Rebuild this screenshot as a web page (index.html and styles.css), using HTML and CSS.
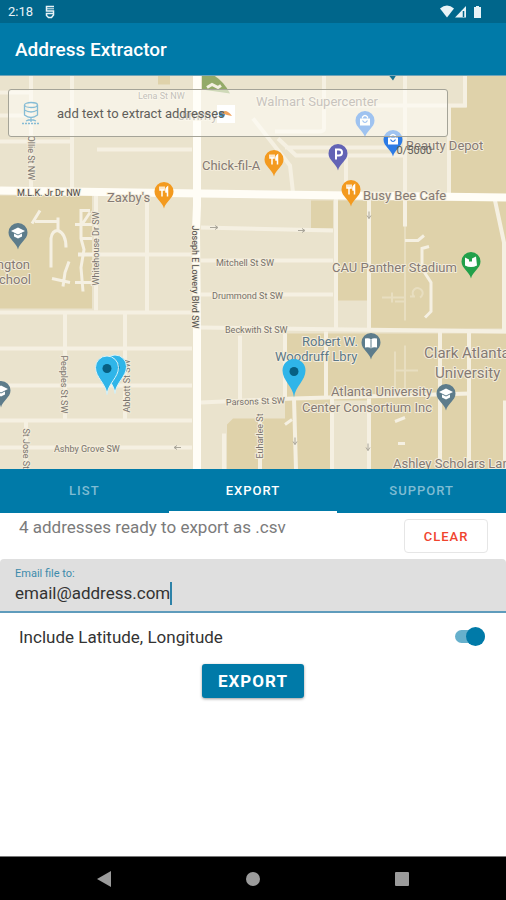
FILE: index.html
```html
<!DOCTYPE html>
<html lang="en">
<head>
	<meta charset="utf-8">
	<meta name="viewport" content="width=device-width, initial-scale=1.0">
	<title>Address Extractor</title>
	<link rel="stylesheet" href="styles.css">
</head>
<body>
	<!-- status bar -->
	<div class="status">
		<span class="time">2:18</span>
		<svg class="status-app" width="10" height="14" viewBox="0 0 10 14">
			<path d="M9 1.500H1.500V6H8.500V10L6.500 12.500H3.500L1.500 10.500V8.500H8" fill="none" stroke="currentColor" stroke-width="1.500"/>
			<path d="M2 3.800H9" fill="none" stroke="currentColor" stroke-width="1"/>
		</svg>
		<svg class="status-icons" width="42" height="14" viewBox="0 0 42 14">
			<path d="M0 3.500Q7 -2.500 14 3.500L7 12.500Z" fill="currentColor"/>
			<path d="M15 12.500L26 1V12.500Z" fill="currentColor"/>
			<path d="M23.500 6V12" stroke="#00668b" stroke-width="1.500"/>
			<path d="M34 2H36V1H39V2H41V13H34Z" fill="currentColor"/>
		</svg>
	</div>

	<header class="appbar">
		<h1>Address Extractor</h1>
	</header>

	<!-- map -->
	<main class="map">
		<svg class="map-canvas" viewBox="0 75 506 394" preserveAspectRatio="xMidYMid slice">
			<defs>
				<path id="pin" d="M0 16C-1.500 9 -9.500 6 -9.500 -1A9.500 9.500 0 0 1 9.500 -1C9.500 6 1.500 9 0 16Z"/>
				<g id="food" fill="none" stroke="#fff" stroke-width="1.500">
					<path d="M-4 -6V-2.500H0V-6M-2 -6V4M3.500 4V-5.500Q1.500 -4 2 -0.500H3.500"/>
				</g>
				<g id="bag">
					<path d="M-5 -3H5V4H-5Z" fill="#fff"/>
					<path d="M-2.500 -3V-4.500Q0 -7.500 2.500 -4.500V-3" fill="none" stroke="#fff" stroke-width="1.300"/>
					<path d="M-2.500 -1Q0 3 2.500 -1" fill="none" stroke="#2c7be5" stroke-width="1.200"/>
				</g>
				<g id="cap" fill="#fff">
					<path d="M0 -6L7 -2.500L0 1L-7 -2.500Z"/>
					<path d="M-4 0L0 2L4 0V3L0 5L-4 3Z"/>
				</g>
				<g id="result">
					<path d="M0 26C-1 15 -11.500 9 -11.500 -1A11.500 11.500 0 0 1 11.500 -1C11.500 9 1 15 0 26Z" fill="#2fb5e9"/>
					<circle r="4.500" fill="#075f82" stroke="none"/>
				</g>
			</defs>

			<!-- blocks -->
			<rect class="land" x="-400" y="75" width="1306" height="394"/>
			<path class="block" d="M0 195H92V308H0ZM466 75H506V195H449V107H466ZM311 200H333V228H311ZM338 200H367V300H338ZM371 200H506V328H371ZM285 333H506V469H227V424L233 418H285Z"/>
			<path class="block" d="M158 75H170V84H158Z"/>
			<path class="land" d="M334 400H367V469H334Z"/>
			<path class="park" d="M202 75H214Q224 81 230 93L202 89Z"/>
			<path d="M207 87L212 84L218 87L221 85" class="path"/>

			<!-- streets -->
			<g class="street">
				<path d="M31 75V190M72 75V190M0 92H31M0 115H31M0 141H72M97 149H192M147 195V312M96 195V310M78 254H192"/>
				<path d="M0 312H192M65 313V418M125 313V418M0 348H192M0 385H192M0 420H192M0 447H192M26 420V469"/>
				<path d="M201 227L333 230M201 260H333M201 294H333M201 327L506 331M240 335V401M201 402L293 398L470 393M224 433V469"/>
				<path d="M336 197V328M369 197V328M405 75V226M449 107V195M324 75V128Q324 131 318 131H275M324 105H465V75"/>
				<path d="M253 118L290 165L293 192M278 138L296 155H405M285 147H390M346 155V192M495 200L504 242V331"/>
				<path d="M285 333V397M326 331V397M440 331V469M469 331V469M332 398V469M369 398V469M294 398L296 469M260 415V469M505 400V469"/>
			</g>
			<g class="path">
				<path d="M32 223L40 210M35 221H58M58 217V230M51 267V238Q52 230 58 230Q66 233 66 247"/>
				<path d="M90 210H81V238L84 249L81 267L83 291M90 212L82 224M75 224H92M80 238H92M75 282H93M69 261L65 272L63 286M52 278L70 282"/>
				<path d="M405 240H418L424 235M429 246L422 248V268L431 282V311L425 317M285 424L292 419M395 421L405 417M398 443H405"/>
				<path class="faint" d="M382 297H405M392 292V302M405 225V320M395 301H405M410 296H415M414 296A5 5 0 1 1 420 297M394 370H418M395 351V388M405 345V390"/>
			</g>
			<path class="main-road" d="M0 190L201 193L506 197"/>
			<path class="main-road" d="M197 75V205L196 230L197 335V469"/>
			<g class="arrow">
				<path d="M210 227H218M218 227L215 225M218 227L215 229M298 230H305M305 230L302 228M305 230L302 232"/>
				<path d="M369 211V218M369 218L367 215M369 218L371 215M174 447H181M174 447L177 445M174 447L177 449M295 437V444M295 444L293 441M295 444L297 441M368 443V450M368 450L366 447M368 450L370 447"/>
			</g>

			<!-- street names -->
			<g class="road-name">
				<text x="17" y="195" class="dark">M.L.K. Jr Dr NW</text>
				<text x="138" y="98">Lena St NW</text>
				<text x="216" y="265">Mitchell St SW</text>
				<text x="212" y="298">Drummond St SW</text>
				<text x="225" y="332">Beckwith St SW</text>
				<text transform="translate(226 405) rotate(-2)">Parsons St SW</text>
				<text x="54" y="451">Ashby Grove SW</text>
				<text transform="translate(28 135) rotate(90)">Ollie St NW</text>
				<text transform="translate(99 285) rotate(-90)">Whitehouse Dr SW</text>
				<text class="dark" transform="translate(192 225) rotate(90)">Joseph E Lowery Blvd SW</text>
				<text transform="translate(61 355) rotate(90)">Peeples St SW</text>
				<text transform="translate(130 412) rotate(-90)">Abbott St SW</text>
				<text transform="translate(23 428) rotate(90)">St Jose St</text>
				<text transform="translate(263 458) rotate(-90)">Euharlee St</text>
			</g>

			<!-- places -->
			<g class="place">
				<text x="256" y="105">Walmart Supercenter</text>
				<text x="178" y="119">Jimmy</text>
				<text x="202" y="169">Chick-fil-A</text>
				<text x="107" y="201">Zaxby's</text>
				<text x="363" y="199">Busy Bee Cafe</text>
				<text x="406" y="149">Beauty Depot</text>
				<text x="332" y="271">CAU Panther Stadium</text>
				<text x="30" y="268" text-anchor="end">Washington</text>
				<text x="31" y="283" text-anchor="end">High School</text>
				<text class="library" x="302" y="345">Robert W.</text>
				<text class="library" x="275" y="360">Woodruff Lbry</text>
				<text x="331" y="395">Atlanta University</text>
				<text x="302" y="411">Center Consortium Inc</text>
				<text class="big" x="424" y="357">Clark Atlanta</text>
				<text class="big" x="435" y="377">University</text>
				<text x="393" y="467">Ashley Scholars Landing</text>
			</g>

			<!-- place pins -->
			<g transform="translate(164 192)"><use href="#pin" fill="#f39a1f"/><use href="#food"/></g>
			<g transform="translate(274 160)"><use href="#pin" fill="#f39a1f"/><use href="#food"/></g>
			<g transform="translate(351 190)"><use href="#pin" fill="#f39a1f"/><use href="#food"/></g>
			<g transform="translate(338 154)"><use href="#pin" fill="#6263b5"/><path d="M-2 5V-5H1Q4 -5 4 -2T1 1H-2" fill="none" stroke="#fff" stroke-width="2"/></g>
			<g transform="translate(365 121)"><use href="#pin" fill="#2c7be5"/><use href="#bag"/></g>
			<g transform="translate(393 140)"><use href="#pin" fill="#2c7be5"/><use href="#bag"/></g>
			<g transform="translate(18 233)"><use href="#pin" fill="#5d7c8b"/><use href="#cap"/></g>
			<g transform="translate(1 391)"><use href="#pin" fill="#5d7c8b"/><use href="#cap"/></g>
			<g transform="translate(446 394)"><use href="#pin" fill="#5d7c8b"/><use href="#cap"/></g>
			<g transform="translate(371 343)"><use href="#pin" fill="#5d7c8b"/><path d="M-6 -5Q-2 -6 0 -4Q2 -6 6 -5V4Q2 3 0 5Q-2 3 -6 4Z" fill="#fff"/><path d="M0 -4V5" stroke="#5d7c8b"/></g>
			<g transform="translate(471 262)"><use href="#pin" fill="#22a04a"/><path d="M-6 -5L-2 -3V-1H1V-4L5 -6L6 3Q0 6 -6 3Z" fill="#fff"/></g>
			<path d="M389 75H396L393 80Z" fill="#14708f"/>

			<!-- extracted addresses -->
			<g stroke="#d9f2f7" stroke-width="1"><use href="#result" x="115" y="367"/></g>
			<g stroke="#d9f2f7" stroke-width="1"><use href="#result" x="107" y="368"/></g>
			<use href="#result" x="294" y="371"/>
		</svg>

		<form class="search">
			<svg class="db" width="20" height="24" viewBox="0 0 20 24">
				<g fill="none" stroke="#86bcd5" stroke-width="1.300">
					<ellipse cx="10" cy="4" rx="6.500" ry="2.500"/>
					<path d="M3.500 4V14Q10 19 16.500 14V4M3.500 9Q10 13 16.500 9M10 16.500V21M5 20Q10 17.500 15 20"/>
					<path d="M1 22.500H19" stroke-dasharray="2 1"/>
				</g>
			</svg>
			<svg class="logo" width="18" height="18" viewBox="0 0 18 18">
				<rect width="18" height="18" fill="#fff"/>
				<circle cx="5" cy="9" r="3" fill="#3e94c6"/>
				<path d="M4 8Q9 3 15 11L10 10Z" fill="#f0a25c"/>
			</svg>
			<input class="search-input" type="text" aria-label="Text" placeholder="add text to extract addresses">
		</form>
		<span class="counter">0/5000</span>
	</main>

	<nav class="tabs">
		<button type="button">LIST</button>
		<button type="button" class="active">EXPORT</button>
		<button type="button">SUPPORT</button>
	</nav>

	<section class="panel">
		<div class="summary">
			<p>4 addresses ready to export as .csv</p>
			<button type="button" class="clear">CLEAR</button>
		</div>

		<div class="field">
			<label for="email">Email file to:</label>
			<div class="field-row">
				<input id="email" type="text" value="email@address.com">
				<span class="caret"></span>
			</div>
		</div>

		<div class="option">
			<label for="latlng">Include Latitude, Longitude</label>
			<input id="latlng" class="switch" type="checkbox" checked>
		</div>

		<button type="button" class="export">EXPORT</button>
	</section>

	<!-- system navigation -->
	<footer class="sysnav">
		<svg width="16" height="16" viewBox="0 0 16 16"><path d="M1 8L15 0V16Z"/></svg>
		<svg width="16" height="16" viewBox="0 0 16 16"><circle cx="8" cy="8" r="7"/></svg>
		<svg width="16" height="16" viewBox="0 0 16 16"><rect x="1" y="1" width="14" height="14" rx="1"/></svg>
	</footer>
</body>
</html>
```
FILE: styles.css
```css
* {
	margin: 0;
	padding: 0;
	box-sizing: border-box;
}

body {
	min-height: 100vh;
	display: flex;
	flex-direction: column;
	font-family: Roboto, "Liberation Sans", sans-serif;
	background-color: #fff;
	color: #333;
}

button, input {
	font-family: inherit;
	border: none;
	outline: none;
	background: none;
}

svg {
	display: block;
}

/* status bar */
.status {
	height: 23px;
	padding: 0 24px 0 8px;
	display: flex;
	align-items: center;
	gap: 12px;
	background-color: #00668b;
	color: #e8f3f7;
	font-size: 13px;
}

.status-icons {
	margin-left: auto;
}

.appbar {
	height: 52px;
	padding: 0 15px;
	display: flex;
	align-items: center;
	background-color: #007aa8;
	color: #fff;
}

.appbar h1 {
	font-size: 19px;
	font-weight: 500;
}

/* map */
.map {
	position: relative;
	border-top: 1px solid #6fa3b8;
}

.map-canvas {
	width: 100%;
	height: 393px;
}

.land {
	fill: #eae3cd;
}

.block {
	fill: #dfd2aa;
}

.park {
	fill: #94aa69;
}

.street, .path {
	fill: none;
	stroke: #f5f0e2;
	stroke-width: 4px;
}

.path {
	stroke-width: 3px;
}

.faint {
	stroke-width: 2px;
	opacity: 0.4;
}

.main-road {
	fill: none;
	stroke: #fffdf6;
	stroke-width: 8px;
}

.arrow {
	fill: none;
	stroke: #aaa69a;
	stroke-width: 1px;
}

.road-name text, .place text {
	paint-order: stroke;
	stroke: #f3ecda;
	stroke-width: 2px;
	stroke-linejoin: round;
}

.road-name {
	font-size: 9px;
	fill: #77726c;
}

.road-name .dark {
	fill: #4a4744;
}

.place {
	font-size: 13px;
	fill: #857a74;
}

.place .library {
	fill: #5c7887;
}

.place .big {
	font-size: 15px;
}

/* text box over the map */
.search {
	position: absolute;
	top: 13px;
	left: 8px;
	right: 58px;
	height: 48px;
	padding: 0 12px;
	display: flex;
	align-items: center;
	border: 1px solid #a5a498;
	border-radius: 3px;
	background-color: rgba(255, 255, 250, 0.55);
}

.search-input {
	position: relative;
	flex: 1;
	min-width: 0;
	margin-left: 16px;
	font-size: 13px;
}

.search-input::placeholder {
	color: #5f5e5a;
}

.logo {
	position: absolute;
	top: 15px;
	left: 208px;
}

.counter {
	position: absolute;
	top: 68px;
	right: 74px;
	font-size: 11px;
	color: #5f5e5a;
}

/* tabs */
.tabs {
	display: grid;
	grid-template-columns: repeat(3, 1fr);
	height: 44px;
	background-color: #007aa8;
}

.tabs button {
	font-size: 13px;
	font-weight: 500;
	letter-spacing: 1px;
	color: #7fbcd3;
	border-bottom: 2px solid transparent;
}

.tabs .active {
	color: #fff;
	border-bottom-color: #fff;
}

/* export panel */
.panel {
	flex: 1;
	display: flex;
	flex-direction: column;
}

.summary {
	height: 46px;
	padding: 4px 18px 0 19px;
	display: flex;
	justify-content: space-between;
	align-items: flex-start;
}

.summary p {
	font-size: 17px;
	line-height: 20px;
	color: #7b7b7b;
}

.clear {
	width: 84px;
	height: 34px;
	margin-top: 2px;
	border: 1px solid #e6e6e6;
	border-radius: 4px;
	font-size: 13px;
	font-weight: 500;
	letter-spacing: 1px;
	color: #f0442e;
}

.field {
	height: 54px;
	padding: 8px 15px 0;
	border-bottom: 2px solid #5f9cbc;
	border-radius: 4px 4px 0 0;
	background-color: #dfdfdf;
}

.field label {
	display: block;
	font-size: 11px;
	line-height: 14px;
	color: #3d8bac;
}

.field-row {
	display: flex;
	align-items: center;
}

.field input {
	field-sizing: content;
	font-size: 17px;
	line-height: 24px;
	color: #333;
}

.caret {
	width: 2px;
	height: 23px;
	background-color: #2d82a8;
}

.option {
	height: 47px;
	padding: 0 21px 0 19px;
	display: flex;
	justify-content: space-between;
	align-items: center;
	font-size: 17px;
}

.switch {
	appearance: none;
	width: 30px;
	height: 13px;
	display: flex;
	align-items: center;
	justify-content: flex-end;
	border-radius: 7px;
	background-color: #66b0cc;
}

.switch::before {
	content: "";
	width: 19px;
	height: 19px;
	flex-shrink: 0;
	border-radius: 50%;
	background-color: #007aa8;
}

.export {
	align-self: center;
	width: 102px;
	height: 34px;
	margin-top: 4px;
	border-radius: 3px;
	background-color: #007aa8;
	box-shadow: 0 1px 3px rgba(0, 0, 0, 0.4);
	font-size: 17px;
	font-weight: 700;
	letter-spacing: 1px;
	color: #fff;
}

.sysnav {
	height: 44px;
	padding: 0 30px;
	display: flex;
	justify-content: space-around;
	align-items: center;
	border-top: 1px solid #777;
	background-color: #000;
	fill: #9b9b9b;
}
```
